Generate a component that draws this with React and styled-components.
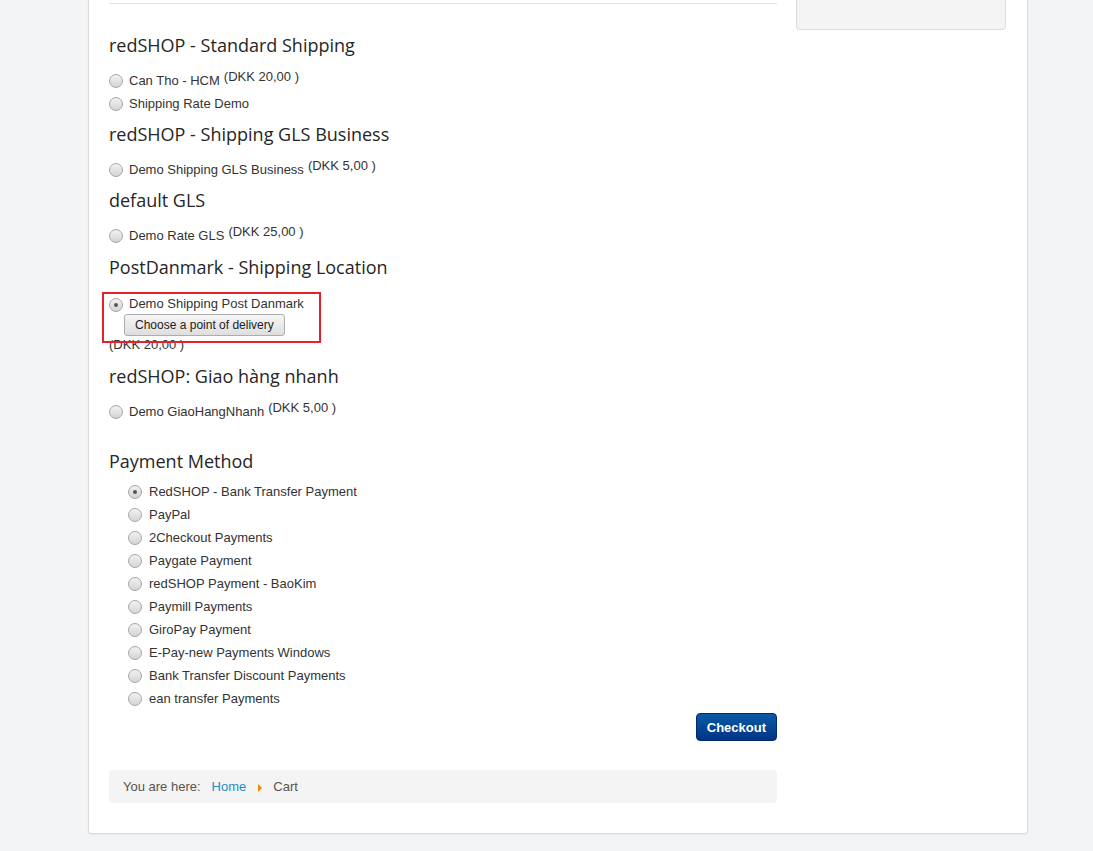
import React from 'react';
import styled, { createGlobalStyle } from 'styled-components';

const GlobalStyle = createGlobalStyle`
  html, body {
    margin: 0;
    padding: 0;
    background: #f3f4f6;
  }
  body {
    font-family: "Liberation Sans", Arial, sans-serif;
    font-size: 13px;
    color: #333;
  }
`;

//outer page
const Page = styled.div`
  padding-left: 88px;
  min-height: 851px;
  box-sizing: border-box;
`;

//white card holding everything
const Panel = styled.div`
  width: 940px;
  box-sizing: border-box;
  background: #fff;
  border: 1px solid #dcdcdc;
  border-top: 0;
  border-radius: 0 0 4px 4px;
  box-shadow: 0 1px 2px rgba(0, 0, 0, 0.05);
  padding: 0 21px 30px 20px;
  display: flex;
  gap: 19px;
`;

const Main = styled.div`
  width: 668px;
  display: flex;
  flex-direction: column;
`;

const Sidebar = styled.div`
  width: 210px;
  height: 30px;
  box-sizing: border-box;
  background: #f4f4f4;
  border: 1px solid #ddd;
  border-top: 0;
  border-radius: 0 0 4px 4px;
`;

const Rule = styled.hr`
  margin: 3px 0 0;
  border: 0;
  border-top: 1px solid #e2e2e2;
`;

//section heading
const Heading = styled.h3`
  font-family: "Open Sans", sans-serif;
  font-weight: 500;
  font-size: 18px;
  line-height: 24px;
  color: #262626;
  margin: ${(p) => p.$top || 7}px 0 ${(p) => p.$bottom || 12}px;
`;

const Row = styled.div`
  display: flex;
  align-items: flex-start;
  padding-left: ${(p) => (p.$indent ? 19 : 0)}px;
  margin-top: ${(p) => p.$shift || 0}px;
  min-height: 23px;
  line-height: 23px;
`;

//old-style gray radio
const Radio = styled.span`
  flex: none;
  width: 12px;
  height: 12px;
  margin-top: 5px;
  border-radius: 50%;
  border: 1px solid #a6a6a6;
  background: linear-gradient(#f2f2f2, #d4d4d4);
  display: flex;
  align-items: center;
  justify-content: center;
  &::after {
    content: '';
    display: ${(p) => (p.$checked ? 'block' : 'none')};
    width: 4px;
    height: 4px;
    border-radius: 50%;
    background: #555;
  }
`;

const Label = styled.div`
  margin-left: ${(p) => (p.$wide ? 7 : 6)}px;
  color: #333;
`;

const Price = styled.span`
  position: relative;
  top: -4px;
  margin-left: 4px;
`;

const PostBlock = styled.div`
  position: relative;
`;

const PostLabel = styled.div`
  margin-left: 6px;
  line-height: 20px;
  padding-top: 1px;
`;

const PointButton = styled.button`
  display: block;
  margin: 0 0 0 -5px;
  height: 22px;
  padding: 0 10px;
  font-family: "Liberation Sans", Arial, sans-serif;
  font-size: 12px;
  color: #222;
  border: 1px solid #adadad;
  border-radius: 3px;
  background: linear-gradient(#f6f6f6, #dedede);
`;

const PostPrice = styled.div`
  line-height: 18px;
  margin-top: 0;
`;

//red highlight drawn over the post danmark row
const Highlight = styled.div`
  position: absolute;
  left: -7px;
  top: 1px;
  width: 219px;
  height: 51px;
  box-sizing: border-box;
  border: 2px solid #e3232b;
  pointer-events: none;
`;

const Actions = styled.div`
  display: flex;
  justify-content: flex-end;
  margin-top: 3px;
`;

const CheckoutButton = styled.button`
  height: 28px;
  padding: 0 10px;
  font-family: "Liberation Sans", Arial, sans-serif;
  font-size: 13px;
  font-weight: 700;
  color: #fff;
  border: 1px solid #002a6e;
  border-radius: 4px;
  background: linear-gradient(#0a5aa6, #003484);
`;

const Breadcrumb = styled.div`
  margin-top: 29px;
  height: 33px;
  background: #f4f4f4;
  border-radius: 4px;
  display: flex;
  align-items: center;
  padding-left: 14px;
  color: #555;
`;

const Crumb = styled.span`
  color: ${(p) => (p.$link ? '#2a8ac6' : '#555')};
  margin-right: ${(p) => p.$gap || 0}px;
`;

const Arrow = styled.span`
  width: 0;
  height: 0;
  border-top: 4px solid transparent;
  border-bottom: 4px solid transparent;
  border-left: 4px solid #f08a00;
  margin: 2px 11px 0 0;
`;

const shipping = [
  { title: 'redSHOP - Standard Shipping', top: 29, rates: [['Can Tho - HCM', 'DKK 20,00 '], ['Shipping Rate Demo']] },
  { title: 'redSHOP - Shipping GLS Business', rates: [['Demo Shipping GLS Business', 'DKK 5,00 ']] },
  { title: 'default GLS', rates: [['Demo Rate GLS', 'DKK 25,00 ']] },
];

const payments = [
  'RedSHOP - Bank Transfer Payment',
  'PayPal',
  '2Checkout Payments',
  'Paygate Payment',
  'redSHOP Payment - BaoKim',
  'Paymill Payments',
  'GiroPay Payment',
  'E-Pay-new Payments Windows',
  'Bank Transfer Discount Payments',
  'ean transfer Payments',
];

const App = () => {
  return (
    <Page>
      <GlobalStyle />
      <Panel>
        <Main>
          <Rule />
          {shipping.map((group) => (
            <div key={group.title}>
              <Heading $top={group.top}>{group.title}</Heading>
              {group.rates.map(([name, price]) => (
                <Row key={name}>
                  <Radio />
                  <Label>
                    {name}
                    {price ? <Price>({price})</Price> : null}
                  </Label>
                </Row>
              ))}
            </div>
          ))}

          {/*post danmark with the delivery point button*/}
          <Heading $top={8}>PostDanmark - Shipping Location</Heading>
          <PostBlock>
            <Row $shift={2}>
              <Radio $checked />
              <PostLabel>
                Demo Shipping Post Danmark
                <PointButton>Choose a point of delivery</PointButton>
              </PostLabel>
            </Row>
            <PostPrice>(DKK 20,00 )</PostPrice>
            <Highlight />
          </PostBlock>

          <Heading $top={10}>redSHOP: Giao hàng nhanh</Heading>
          <Row>
            <Radio />
            <Label>
              Demo GiaoHangNhanh<Price>(DKK 5,00 )</Price>
            </Label>
          </Row>

          <Heading $top={26} $bottom={7}>Payment Method</Heading>
          {payments.map((name, i) => (
            <Row key={name} $indent>
              <Radio $checked={i === 0} />
              <Label $wide>{name}</Label>
            </Row>
          ))}

          <Actions>
            <CheckoutButton>Checkout</CheckoutButton>
          </Actions>

          <Breadcrumb>
            <Crumb $gap={11}>You are here: </Crumb>
            <Crumb $link $gap={12}>Home</Crumb>
            <Arrow />
            <Crumb>Cart</Crumb>
          </Breadcrumb>
        </Main>
        <Sidebar />
      </Panel>
    </Page>
  );
};

export default App;
